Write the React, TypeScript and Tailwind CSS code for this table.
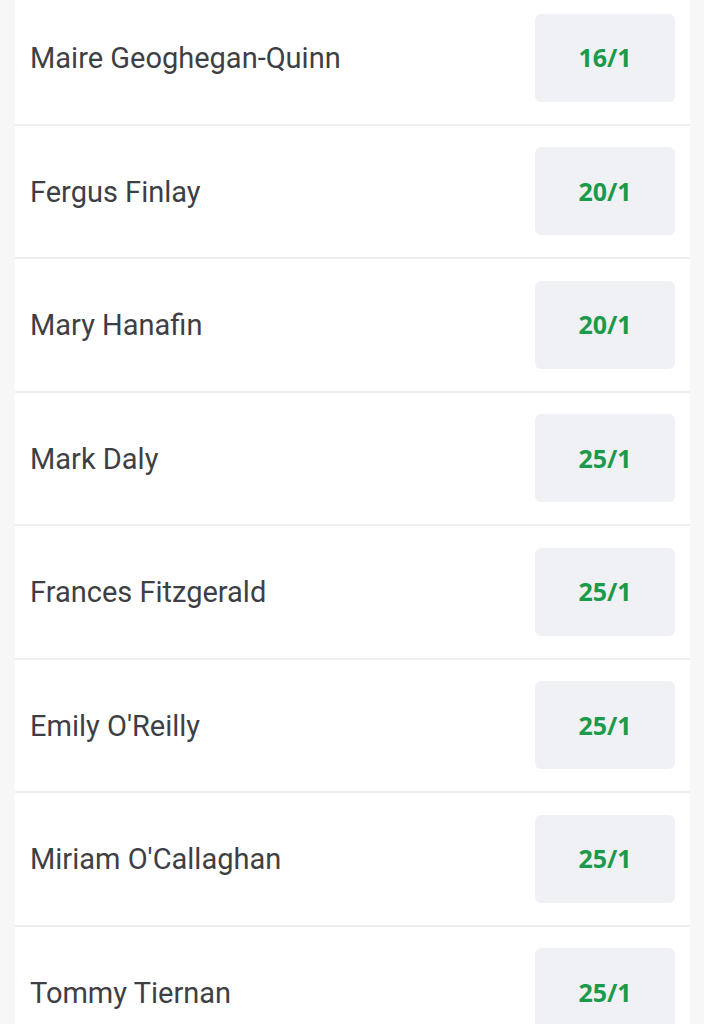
const runners = [
  { name: 'Maire Geoghegan-Quinn', odds: '16/1' },
  { name: 'Fergus Finlay', odds: '20/1' },
  { name: 'Mary Hanafin', odds: '20/1' },
  { name: 'Mark Daly', odds: '25/1' },
  { name: 'Frances Fitzgerald', odds: '25/1' },
  { name: "Emily O'Reilly", odds: '25/1' },
  { name: "Miriam O'Callaghan", odds: '25/1' },
  { name: 'Tommy Tiernan', odds: '25/1' },
]

function RunnerRow({ name, odds }: { name: string; odds: string }) {
  return (
    <li className="h-[133.5px] flex items-center justify-between pl-[15px] pr-[15px] border-b-2 border-[#eeeeef]">
      <span className="text-[29px] text-[#3e3f44] font-['Roboto',sans-serif] pt-[2px]">{name}</span>
      <button className="w-[140px] h-[88px] rounded-md bg-[#f0f1f4] text-[#1b9a4b] text-[25px] font-bold font-['Open_Sans',sans-serif]">
        {odds}
      </button>
    </li>
  )
}

export default function App() {
  return (
    <div className="min-h-screen bg-[#f7f7f8] overflow-hidden">
      <div className="ml-[15px] w-[675px] bg-white -mt-[8px]">
        <ul>
          {runners.map((r) => (
            <RunnerRow key={r.name} {...r} />
          ))}
        </ul>
      </div>
    </div>
  )
}
